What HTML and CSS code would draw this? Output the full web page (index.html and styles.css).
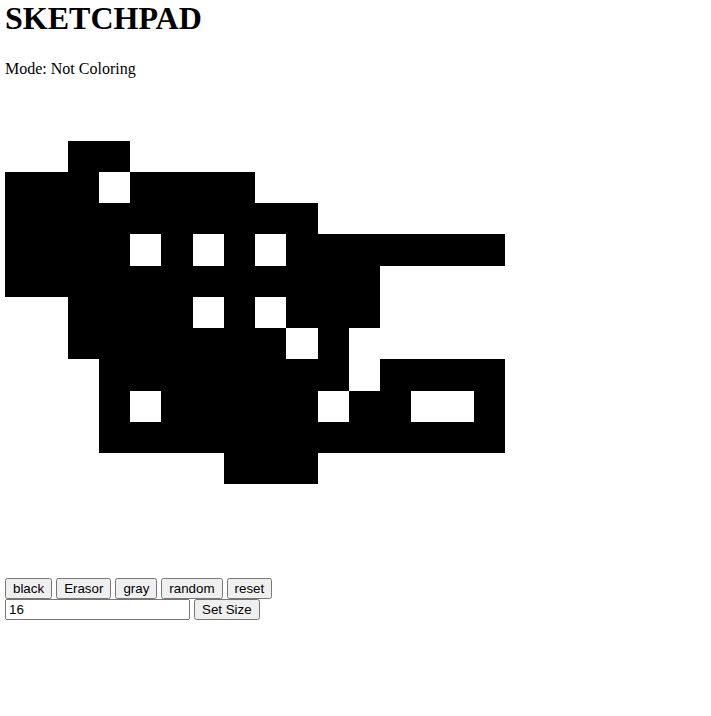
FILE: index.html
```html
<!DOCTYPE html>
<html>
<head>
<meta charset="utf-8">
<title>Sketchpad</title>
<link rel="stylesheet" href="styles.css">
</head>
<body>
<h1 class="title">SKETCHPAD</h1>
<p class="mode">Mode: Not Coloring</p>
<div class="grid">
<div class="c"></div><div class="c"></div><div class="c"></div><div class="c"></div><div class="c"></div><div class="c"></div><div class="c"></div><div class="c"></div><div class="c"></div><div class="c"></div><div class="c"></div><div class="c"></div><div class="c"></div><div class="c"></div><div class="c"></div><div class="c"></div>
<div class="c"></div><div class="c"></div><div class="c"></div><div class="c"></div><div class="c"></div><div class="c"></div><div class="c"></div><div class="c"></div><div class="c"></div><div class="c"></div><div class="c"></div><div class="c"></div><div class="c"></div><div class="c"></div><div class="c"></div><div class="c"></div>
<div class="c"></div><div class="c"></div><div class="c on"></div><div class="c on"></div><div class="c"></div><div class="c"></div><div class="c"></div><div class="c"></div><div class="c"></div><div class="c"></div><div class="c"></div><div class="c"></div><div class="c"></div><div class="c"></div><div class="c"></div><div class="c"></div>
<div class="c on"></div><div class="c on"></div><div class="c on"></div><div class="c"></div><div class="c on"></div><div class="c on"></div><div class="c on"></div><div class="c on"></div><div class="c"></div><div class="c"></div><div class="c"></div><div class="c"></div><div class="c"></div><div class="c"></div><div class="c"></div><div class="c"></div>
<div class="c on"></div><div class="c on"></div><div class="c on"></div><div class="c on"></div><div class="c on"></div><div class="c on"></div><div class="c on"></div><div class="c on"></div><div class="c on"></div><div class="c on"></div><div class="c"></div><div class="c"></div><div class="c"></div><div class="c"></div><div class="c"></div><div class="c"></div>
<div class="c on"></div><div class="c on"></div><div class="c on"></div><div class="c on"></div><div class="c"></div><div class="c on"></div><div class="c"></div><div class="c on"></div><div class="c"></div><div class="c on"></div><div class="c on"></div><div class="c on"></div><div class="c on"></div><div class="c on"></div><div class="c on"></div><div class="c on"></div>
<div class="c on"></div><div class="c on"></div><div class="c on"></div><div class="c on"></div><div class="c on"></div><div class="c on"></div><div class="c on"></div><div class="c on"></div><div class="c on"></div><div class="c on"></div><div class="c on"></div><div class="c on"></div><div class="c"></div><div class="c"></div><div class="c"></div><div class="c"></div>
<div class="c"></div><div class="c"></div><div class="c on"></div><div class="c on"></div><div class="c on"></div><div class="c on"></div><div class="c"></div><div class="c on"></div><div class="c"></div><div class="c on"></div><div class="c on"></div><div class="c on"></div><div class="c"></div><div class="c"></div><div class="c"></div><div class="c"></div>
<div class="c"></div><div class="c"></div><div class="c on"></div><div class="c on"></div><div class="c on"></div><div class="c on"></div><div class="c on"></div><div class="c on"></div><div class="c on"></div><div class="c"></div><div class="c on"></div><div class="c"></div><div class="c"></div><div class="c"></div><div class="c"></div><div class="c"></div>
<div class="c"></div><div class="c"></div><div class="c"></div><div class="c on"></div><div class="c on"></div><div class="c on"></div><div class="c on"></div><div class="c on"></div><div class="c on"></div><div class="c on"></div><div class="c on"></div><div class="c"></div><div class="c on"></div><div class="c on"></div><div class="c on"></div><div class="c on"></div>
<div class="c"></div><div class="c"></div><div class="c"></div><div class="c on"></div><div class="c"></div><div class="c on"></div><div class="c on"></div><div class="c on"></div><div class="c on"></div><div class="c on"></div><div class="c"></div><div class="c on"></div><div class="c on"></div><div class="c"></div><div class="c"></div><div class="c on"></div>
<div class="c"></div><div class="c"></div><div class="c"></div><div class="c on"></div><div class="c on"></div><div class="c on"></div><div class="c on"></div><div class="c on"></div><div class="c on"></div><div class="c on"></div><div class="c on"></div><div class="c on"></div><div class="c on"></div><div class="c on"></div><div class="c on"></div><div class="c on"></div>
<div class="c"></div><div class="c"></div><div class="c"></div><div class="c"></div><div class="c"></div><div class="c"></div><div class="c"></div><div class="c on"></div><div class="c on"></div><div class="c on"></div><div class="c"></div><div class="c"></div><div class="c"></div><div class="c"></div><div class="c"></div><div class="c"></div>
<div class="c"></div><div class="c"></div><div class="c"></div><div class="c"></div><div class="c"></div><div class="c"></div><div class="c"></div><div class="c"></div><div class="c"></div><div class="c"></div><div class="c"></div><div class="c"></div><div class="c"></div><div class="c"></div><div class="c"></div><div class="c"></div>
<div class="c"></div><div class="c"></div><div class="c"></div><div class="c"></div><div class="c"></div><div class="c"></div><div class="c"></div><div class="c"></div><div class="c"></div><div class="c"></div><div class="c"></div><div class="c"></div><div class="c"></div><div class="c"></div><div class="c"></div><div class="c"></div>
<div class="c"></div><div class="c"></div><div class="c"></div><div class="c"></div><div class="c"></div><div class="c"></div><div class="c"></div><div class="c"></div><div class="c"></div><div class="c"></div><div class="c"></div><div class="c"></div><div class="c"></div><div class="c"></div><div class="c"></div><div class="c"></div>
</div>
<div class="controls">
<button>black</button> <button>Erasor</button> <button>gray</button> <button>random</button> <button>reset</button><br>
<input type="text" value="16"> <button>Set Size</button>
</div>
</body>
</html>
```
FILE: styles.css
```css
body {
  margin: 0;
  padding: 0 5px;
  font-family: "Liberation Serif", serif;
  background: #fff;
  color: #000;
}
.title {
  margin: 0 0 23px;
  font-size: 32px;
  font-weight: bold;
}
.mode {
  margin: 0;
  font-size: 16px;
}
.grid {
  display: grid;
  grid-template-columns: repeat(16, 31.25px);
  grid-template-rows: repeat(16, 31.25px);
  width: 500px;
  height: 500px;
}
.c {
  background: #fff;
}
.c.on {
  background: #000;
}
.controls {
  font-size: 16px;
}
```
